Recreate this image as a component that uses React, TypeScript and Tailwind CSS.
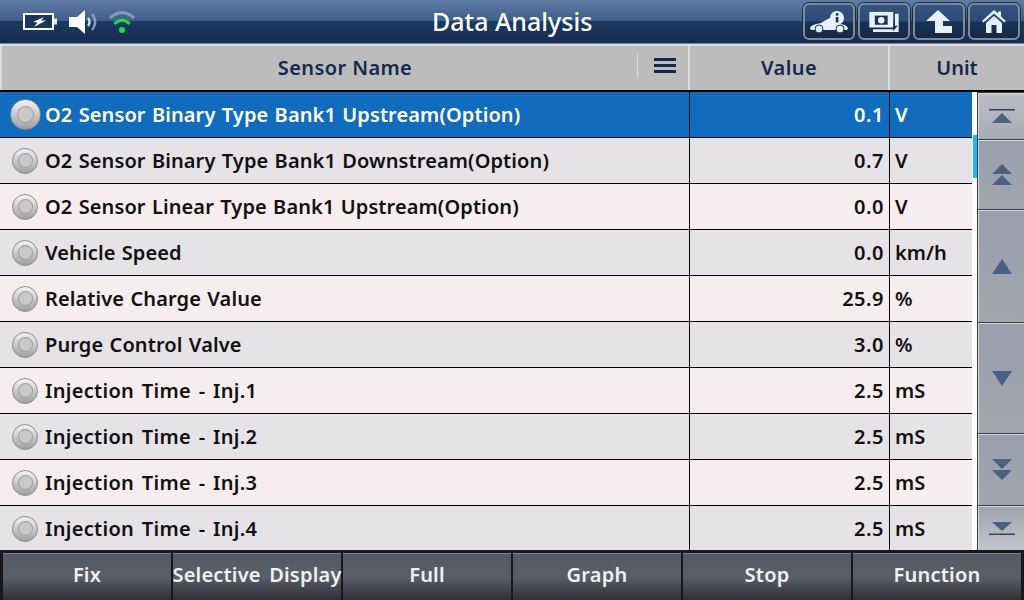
const rows = [
  ["O2 Sensor Binary Type Bank1 Upstream(Option)", "0.1", "V"],
  ["O2 Sensor Binary Type Bank1 Downstream(Option)", "0.7", "V"],
  ["O2 Sensor Linear Type Bank1 Upstream(Option)", "0.0", "V"],
  ["Vehicle Speed", "0.0", "km/h"],
  ["Relative Charge Value", "25.9", "%"],
  ["Purge Control Valve", "3.0", "%"],
  ["Injection Time - Inj.1", "2.5", "mS"],
  ["Injection Time - Inj.2", "2.5", "mS"],
  ["Injection Time - Inj.3", "2.5", "mS"],
  ["Injection Time - Inj.4", "2.5", "mS"],
];

const footer = ["Fix", "Selective Display", "Full", "Graph", "Stop", "Function"];

function Battery() {
  return (
    <svg width="34" height="18" viewBox="0 0 34 18">
      <rect x="1" y="1" width="29" height="15" fill="#1c3558" stroke="#fff" strokeWidth="2" />
      <rect x="31" y="5.5" width="3" height="6" fill="#e8e8e8" />
      <path d="M10 9 L21 4 L18 7.5 L23 7.5 L11 14 L14.5 9.5 Z" fill="#fff" />
    </svg>
  );
}

function Speaker() {
  return (
    <svg width="28" height="24" viewBox="0 0 28 24">
      <path d="M0 7 H8 L16 0 V24 L8 17 H0 Z" fill="#fff" />
      <path d="M19 8 C21 10 21 14 19 16" fill="none" stroke="#d8dde6" strokeWidth="2.4" />
      <path d="M23 4 C27 9 27 15 23 20" fill="none" stroke="#8a9db8" strokeWidth="2.4" />
    </svg>
  );
}

function Wifi() {
  return (
    <svg width="28" height="24" viewBox="0 0 28 24">
      <path d="M2 8 C9 1 19 1 26 8" fill="none" stroke="#8a9db8" strokeWidth="3" />
      <path d="M6.5 14 C11 9 17 9 21.5 14" fill="none" stroke="#12e63c" strokeWidth="3" />
      <circle cx="14" cy="20" r="3" fill="#12e63c" />
    </svg>
  );
}

function TopButton({ children }: { children: React.ReactNode }) {
  return (
    <div className="flex h-[37px] w-[52px] items-center justify-center rounded-[6px] border-2 border-[#7e8a9c] bg-[linear-gradient(#36547f_0%,#2c4a75_48%,#183256_52%,#132947_100%)] shadow-[0_0_0_1px_#1a2c48]">
      {children}
    </div>
  );
}

function Knob({ active }: { active: boolean }) {
  const size = active ? "h-[31px] w-[31px]" : "h-[26px] w-[26px]";
  const inner = active ? "h-[17px] w-[17px]" : "h-[15px] w-[15px]";
  return (
    <div className={`flex shrink-0 items-center justify-center rounded-full border border-[#8c8c8c] bg-gradient-to-b from-[#f4f4f4] to-[#a0a0a0] ${size}`}>
      <div className={`rounded-full border border-[#9a9a9a] bg-[#c8c8c8] ${inner}`} />
    </div>
  );
}

function ScrollIcon({ kind }: { kind: string }) {
  const c = "#4a607f";
  if (kind === "top")
    return (
      <svg width="26" height="14" viewBox="0 0 26 14">
        <rect x="0" y="0" width="26" height="1.5" fill="#33445c" />
        <path d="M13 4 L23 14 H3 Z" fill={c} />
      </svg>
    );
  if (kind === "dup")
    return (
      <svg width="20" height="22" viewBox="0 0 20 22">
        <path d="M10 0 L20 10 H0 Z M10 11 L20 21 H0 Z" fill={c} />
      </svg>
    );
  if (kind === "up")
    return (
      <svg width="20" height="15" viewBox="0 0 20 15">
        <path d="M10 0 L20 15 H0 Z" fill={c} />
      </svg>
    );
  if (kind === "down")
    return (
      <svg width="20" height="15" viewBox="0 0 20 15">
        <path d="M10 15 L20 0 H0 Z" fill={c} />
      </svg>
    );
  if (kind === "ddown")
    return (
      <svg width="20" height="21" viewBox="0 0 20 21">
        <path d="M10 10 L20 0 H0 Z M10 21 L20 11 H0 Z" fill={c} />
      </svg>
    );
  return (
    <svg width="26" height="13" viewBox="0 0 26 13">
      <path d="M13 9 L23 0 H3 Z" fill={c} />
      <rect x="0" y="11.5" width="26" height="1.5" fill="#33445c" />
    </svg>
  );
}

const scrollButtons = [
  { kind: "top", cls: "h-[46px] from-[#bcbcc6] to-[#a8acb6]" },
  { kind: "dup", cls: "h-[70px] from-[#9a9eae] to-[#a0a6ae]" },
  { kind: "up", cls: "h-[112px] from-[#9a9eae] to-[#a0a6ae]" },
  { kind: "down", cls: "h-[110px] from-[#9a9eae] to-[#a0a6ae]" },
  { kind: "ddown", cls: "h-[72px] from-[#9a9eae] to-[#a0a6ae]" },
  { kind: "bottom", cls: "h-[44px] from-[#a0a4b0] to-[#c4c4cc]" },
];

export default function App() {
  return (
    <div className="flex h-[600px] w-[1024px] flex-col overflow-hidden bg-white font-['Noto_Sans','DejaVu_Sans',sans-serif]">
      <header className="flex h-[44px] items-center border-b border-[#7b8596] bg-[linear-gradient(#5d7ca4_0%,#3e5f8a_48%,#1c3a62_50%,#152c50_100%)]">
        <div className="flex w-[300px] items-center pl-[23px]">
          <Battery />
          <div className="ml-[12px]"><Speaker /></div>
          <div className="ml-[11px]"><Wifi /></div>
        </div>
        <div className="flex-1 pl-[132px] text-[25px] font-medium leading-none text-white">Data Analysis</div>
        <div className="flex gap-[3px] pr-[4px]">
          <TopButton>
            <svg width="40" height="24" viewBox="0 0 40 24">
              <path d="M1 19 C1 15 7 14 12 13 C15 11 18 9 21 8 L29 14 C35 14 39 16 39 19 L37 20 H3 Z" fill="#e6f0ff" />
              <circle cx="10" cy="19" r="4" fill="#e6f0ff" stroke="#1a3358" />
              <circle cx="31" cy="19" r="4" fill="#e6f0ff" stroke="#1a3358" />
              <circle cx="28" cy="8" r="7" fill="#e6f0ff" />
              <rect x="26.8" y="7" width="2.6" height="5.5" fill="#1a3358" />
              <rect x="26.8" y="3.2" width="2.6" height="2.4" fill="#1a3358" />
            </svg>
          </TopButton>
          <TopButton>
            <svg width="32" height="22" viewBox="0 0 34 24">
              <rect x="1" y="1" width="26" height="17" fill="#e6f0ff" />
              <rect x="7" y="5" width="14" height="10" fill="#1a3358" />
              <circle cx="14" cy="10" r="3.5" fill="#e6f0ff" />
              <path d="M29 3 H33 V23 H5 V20 H29 Z" fill="#e6f0ff" />
              <path d="M27 22 L32 16 H27 Z" fill="#1a3358" />
            </svg>
          </TopButton>
          <TopButton>
            <svg width="26" height="24" viewBox="0 0 26 24">
              <path d="M12 0 L24 11 H17 V16 H26 V23 H9 V11 H0 Z" fill="#e6f0ff" />
            </svg>
          </TopButton>
          <TopButton>
            <svg width="24" height="24" viewBox="0 0 24 24">
              <path d="M12 0 L16 3.5 V1.5 H19 V6.5 L24 11 L22.5 12.5 L12 3.5 L1.5 12.5 L0 11 Z" fill="#e6f0ff" />
              <path d="M12 6 L20 13 V23 H14.5 V15 H9.5 V23 H4 V13 Z" fill="#e6f0ff" />
            </svg>
          </TopButton>
        </div>
      </header>

      <div className="flex h-[46px] border-t-2 border-[#dcdcdc] bg-[#bcbcbc] text-[20px] font-semibold tracking-[0.4px] text-[#14294a]">
        <div className="relative flex w-[690px] items-center justify-center border-x-2 border-[#dcdcdc]">
          Sensor Name
          <div className="absolute left-[635px] top-[8px] h-[24px] w-px bg-[#dcdcdc]" />
          <div className="absolute left-[652px] top-[12px] flex w-[22px] flex-col gap-[3px]">
            <div className="h-[3px] bg-[#14294a]" />
            <div className="h-[3px] bg-[#14294a]" />
            <div className="h-[3px] bg-[#14294a]" />
          </div>
        </div>
        <div className="flex w-[200px] items-center justify-center border-r-2 border-[#dcdcdc]">Value</div>
        <div className="flex flex-1 items-center justify-center tracking-normal">Unit</div>
      </div>

      <div className="flex h-[460px] border-t-2 border-black bg-white">
        <div className="w-[972px]">
          {rows.map((row, i) => {
            const active = i === 0;
            const bg = active ? "bg-[#116cbd] text-white" : i % 2 === 1 ? "bg-[#e6e3e6] text-[#111]" : "bg-[#f6eeee] text-[#111]";
            const spacing = row[0].startsWith("Injection") ? "tracking-[0.3px] [word-spacing:2.2px]" : "tracking-[0.1px] [word-spacing:1px]";
            return (
              <div key={i} className={`flex h-[46px] border-b border-black text-[20px] font-semibold ${bg}`}>
                <div className={`flex w-[690px] items-center border-r border-black ${active ? "gap-[4px] pl-[10px]" : "gap-[7px] pl-[12px]"}`}>
                  <Knob active={active} />
                  <span className={`whitespace-nowrap ${spacing}`}>{row[0]}</span>
                </div>
                <div className="flex w-[200px] items-center justify-end border-r border-black pr-[5px] tracking-[0.5px]">{row[1]}</div>
                <div className="flex flex-1 items-center pl-[5px]">{row[2]}</div>
              </div>
            );
          })}
        </div>
        <div className="relative w-[5px] bg-white">
          <div className="absolute left-[1px] top-[43px] h-[43px] w-[4px] bg-[#1fb6f5]" />
        </div>
        <div className="flex flex-1 flex-col gap-[1px] bg-[#3c3c3c] pl-[1px] pt-[1px]">
          {scrollButtons.map((b) => (
            <div key={b.kind} className={`flex items-center justify-center border-l border-t border-[#d6d8de] bg-gradient-to-b ${b.cls}`}>
              <ScrollIcon kind={b.kind} />
            </div>
          ))}
        </div>
      </div>

      <footer className="flex h-[50px] gap-[2px] bg-[#16181c] pl-[3px] pt-[3px]">
        {footer.map((label) => (
          <div key={label} className="flex h-[47px] w-[168px] items-center justify-center whitespace-nowrap border-t border-[#7c8088] bg-gradient-to-b from-[#555a64] via-[#5a5e68] to-[#2e3036] pb-[4px] text-[20px] font-semibold tracking-[0.2px] text-[#f0f0f0] [word-spacing:3px]">
            {label}
          </div>
        ))}
      </footer>
    </div>
  );
}
